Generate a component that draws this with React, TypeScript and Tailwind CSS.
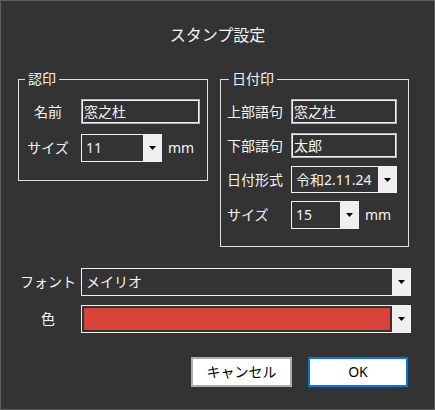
import React from "react";

function Arrow() {
  return (
    <svg width="7" height="4" viewBox="0 0 7 4">
      <path d="M0 0 H7 L3.5 4 Z" fill="#000" />
    </svg>
  );
}

function TextBox({ value, width }: { value: string; width: string }) {
  return (
    <div
      className={`${width} h-[25px] flex items-center border border-[#b4b4b4] shadow-[inset_0_0_0_1px_#f2f2f2] px-[2px] text-[#f4f4f4]`}
    >
      {value}
    </div>
  );
}

function Combo({
  value,
  width,
  height = "h-[28px]",
}: {
  value: string;
  width: string;
  height?: string;
}) {
  return (
    <div className={`${width} ${height} flex border border-[#f0f0f0]`}>
      <div className="flex-1 flex items-center pl-[4px] text-[#f4f4f4]">{value}</div>
      <div className="w-[18px] bg-[#f0f0f0] flex items-center justify-center">
        <Arrow />
      </div>
    </div>
  );
}

export default function App() {
  return (
    <div
      className="w-[435px] h-[410px] bg-[#333333] border border-[#5e5e5e] text-[14px] leading-[20px] text-[#f4f4f4]"
      style={{ fontFamily: '"Noto Sans", "Noto Sans CJK JP", sans-serif' }}
    >
      <div className="mt-[22px] h-[24px] text-center text-[16px] leading-[24px]">
        スタンプ設定
      </div>

      <div className="mt-[22px] pl-[17px] flex items-start gap-[12px]">
        <fieldset className="w-[190px] border border-[#e0e0e0] pt-[10px] pb-[18px]">
          <legend className="ml-[6px] px-[3px]">認印</legend>
          <div className="flex items-center">
            <span className="w-[58px] text-center">名前</span>
            <span className="w-[4px]" />
            <TextBox value="窓之杜" width="w-[119px]" />
          </div>
          <div className="mt-[10px] flex items-center">
            <span className="w-[58px] text-center">サイズ</span>
            <span className="w-[4px]" />
            <Combo value="11" width="w-[81px]" />
            <span className="ml-[6px]">mm</span>
          </div>
        </fieldset>

        <fieldset className="w-[189px] border border-[#e0e0e0] pt-[10px] pb-[17px] pl-[6px]">
          <legend className="ml-[2px] px-[3px]">日付印</legend>
          <div className="flex items-center">
            <span className="w-[64px]">上部語句</span>
            <TextBox value="窓之杜" width="w-[106px]" />
          </div>
          <div className="mt-[9px] flex items-center">
            <span className="w-[64px]">下部語句</span>
            <TextBox value="太郎" width="w-[106px]" />
          </div>
          <div className="mt-[8px] flex items-center">
            <span className="w-[64px]">日付形式</span>
            <Combo value="令和2.11.24" width="w-[106px]" height="h-[27px]" />
          </div>
          <div className="mt-[8px] flex items-center">
            <span className="w-[64px]">サイズ</span>
            <Combo value="15" width="w-[68px]" />
            <span className="ml-[6px]">mm</span>
          </div>
        </fieldset>
      </div>

      <div className="mt-[21px] pl-[16px] flex items-center">
        <span className="w-[62px] text-center">フォント</span>
        <span className="w-[2px]" />
        <Combo value="メイリオ" width="w-[330px]" />
      </div>

      <div className="mt-[9px] pl-[16px] flex items-center">
        <span className="w-[62px] text-center">色</span>
        <span className="w-[2px]" />
        <div className="w-[330px] h-[28px] flex border border-[#f0f0f0]">
          <div className="flex-1 p-[2px] pr-[2px]">
            <div className="h-full bg-[#d9433a]" />
          </div>
          <div className="w-[18px] bg-[#f0f0f0] flex items-center justify-center">
            <Arrow />
          </div>
        </div>
      </div>

      <div className="mt-[24px] pr-[26px] flex justify-end gap-[16px]">
        <button className="w-[101px] h-[30px] bg-white border-2 border-[#adadad] text-black">
          キャンセル
        </button>
        <button className="w-[100px] h-[30px] bg-white border-2 border-[#0078d7] text-black">
          OK
        </button>
      </div>
    </div>
  );
}
